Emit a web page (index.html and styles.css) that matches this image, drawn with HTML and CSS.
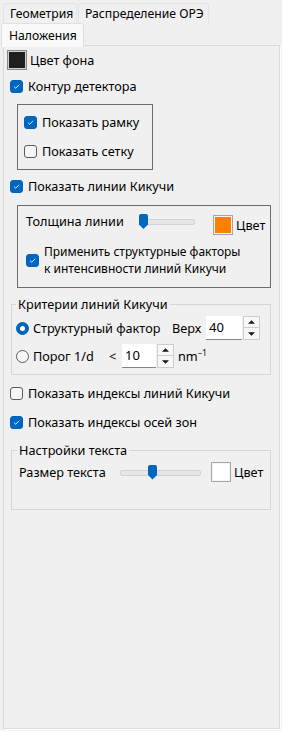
FILE: index.html
```html
<!DOCTYPE html>
<html lang="ru">
<head>
    <meta charset="UTF-8">
    <title>Наложения</title>
    <link rel="stylesheet" href="styles.css">
</head>
<body>
    <div class="tab-row tab-row-back">
        <div class="tab tab-geom">Геометрия</div>
        <div class="tab tab-dist">Распределение ОРЭ</div>
    </div>
    <div class="tab-row tab-row-front">
        <div class="tab tab-active">Наложения</div>
    </div>

    <div class="panel">
        <div class="row swatch-row">
            <span class="swatch swatch-dark"></span>
            <span>Цвет фона</span>
        </div>

        <div class="row check-row gap-6">
            <span class="box on"><svg viewBox="0 0 13 13"><path d="M3.6 6.7 L5.6 8.6 L9.5 4.5"/></svg></span>
            <span>Контур детектора</span>
        </div>

        <div class="frame frame-detector">
            <div class="row check-row">
                <span class="box on"><svg viewBox="0 0 13 13"><path d="M3.6 6.7 L5.6 8.6 L9.5 4.5"/></svg></span>
                <span>Показать рамку</span>
            </div>
            <div class="row check-row gap-9">
                <span class="box"></span>
                <span>Показать сетку</span>
            </div>
        </div>

        <div class="row check-row gap-6">
            <span class="box on"><svg viewBox="0 0 13 13"><path d="M3.6 6.7 L5.6 8.6 L9.5 4.5"/></svg></span>
            <span>Показать линии Кикучи</span>
        </div>

        <div class="frame frame-kikuchi">
            <div class="line-row">
                <span class="line-label">Толщина линии</span>
                <span class="slider slider-line"><span class="handle" style="left: 0px"></span></span>
                <span class="swatch swatch-orange"></span>
                <span class="swatch-text">Цвет</span>
            </div>
            <div class="check-row multi">
                <span class="box on"><svg viewBox="0 0 13 13"><path d="M3.6 6.7 L5.6 8.6 L9.5 4.5"/></svg></span>
                <span>Применить структурные факторы<br>к интенсивности линий Кикучи</span>
            </div>
        </div>

        <fieldset class="group group-criteria">
            <legend>Критерии линий Кикучи</legend>
            <div class="row radio-row">
                <span class="radio on"></span>
                <span class="radio-label label-sf">Структурный фактор</span>
                <span class="label-top">Верх</span>
                <div class="spin">
                    <span class="spin-input spin-wide">40</span>
                    <span class="spin-btns">
                        <span class="spin-btn"><svg viewBox="0 0 7 4"><path d="M0.5 3.5 L3.5 0.5 L6.5 3.5 Z"/></svg></span>
                        <span class="spin-btn"><svg viewBox="0 0 7 4"><path d="M0.5 0.5 L3.5 3.5 L6.5 0.5 Z"/></svg></span>
                    </span>
                </div>
            </div>
            <div class="row radio-row gap-4">
                <span class="radio"></span>
                <span class="radio-label label-d">Порог 1/d</span>
                <span class="label-lt">&lt;</span>
                <div class="spin">
                    <span class="spin-input spin-narrow">10</span>
                    <span class="spin-btns">
                        <span class="spin-btn"><svg viewBox="0 0 7 4"><path d="M0.5 3.5 L3.5 0.5 L6.5 3.5 Z"/></svg></span>
                        <span class="spin-btn"><svg viewBox="0 0 7 4"><path d="M0.5 0.5 L3.5 3.5 L6.5 0.5 Z"/></svg></span>
                    </span>
                </div>
                <span class="unit">nm<sup>−1</sup></span>
            </div>
        </fieldset>

        <div class="row check-row gap-8">
            <span class="box"></span>
            <span>Показать индексы линий Кикучи</span>
        </div>
        <div class="row check-row gap-9">
            <span class="box on"><svg viewBox="0 0 13 13"><path d="M3.6 6.7 L5.6 8.6 L9.5 4.5"/></svg></span>
            <span>Показать индексы осей зон</span>
        </div>

        <fieldset class="group group-text">
            <legend>Настройки текста</legend>
            <div class="row text-row">
                <span class="size-label">Размер текста</span>
                <span class="slider slider-size"><span class="handle" style="left: 28px"></span></span>
                <span class="swatch swatch-white"></span>
                <span class="swatch-text">Цвет</span>
            </div>
        </fieldset>
    </div>
</body>
</html>
```

FILE: styles.css
```css
* {
    box-sizing: border-box;
}

body {
    margin: 0;
    height: 731px;
    display: flex;
    flex-direction: column;
    background: #f0f0f0;
    color: #000;
    font-family: "Noto Sans", sans-serif;
    font-size: 12.7px;
}

/* tabs */
.tab-row {
    display: flex;
    gap: 1px;
}

.tab-row-back {
    margin-top: 3px;
    padding-left: 3px;
    height: 20px;
}

.tab-row-front {
    padding-left: 1px;
    height: 23px;
    position: relative;
    z-index: 1;
    margin-bottom: -1px;
}

.tab {
    height: 20px;
    padding: 0 6px;
    line-height: 19px;
    font-size: 12.2px;
    border: 1px solid #e3e3e3;
    border-bottom: none;
    border-radius: 3px 3px 0 0;
    background: #f0f0f0;
    white-space: nowrap;
}

.tab-geom {
    width: 74px;
}

.tab-dist {
    width: 131px;
}

.tab-active {
    width: 83px;
    height: 24px;
    line-height: 23px;
    padding-left: 7px;
    background: #f9f9f9;
    border-color: #e0e0e0;
}

/* panel */
.panel {
    flex: 1;
    margin: 0 2px 2px 3px;
    padding-top: 4px;
    border: 1px solid #dadada;
    box-shadow: 1px 1px 0 #fdfdfd;
}

.row {
    display: flex;
    align-items: center;
    height: 20px;
    white-space: nowrap;
}

.gap-4 { margin-top: 4px; }
.gap-6 { margin-top: 6px; }
.gap-8 { margin-top: 8px; }
.gap-9 { margin-top: 9px; }

.swatch-row {
    margin-left: 3px;
    gap: 3px;
}

.swatch {
    display: inline-block;
    width: 20px;
    height: 20px;
    flex: none;
    border: 1px solid #a6a6a6;
    box-shadow: inset 0 0 0 1px #f5f5f5;
}

.swatch-dark {
    background: #1f1f1f;
    border-color: #8a8a8a;
    box-shadow: inset 0 0 0 1px #cfcfcf;
}

.swatch-orange {
    background: #ff8000;
}

.swatch-white {
    background: #fff;
}

/* checkboxes */
.check-row {
    margin-left: 6px;
    gap: 5px;
}

.box {
    width: 13px;
    height: 13px;
    flex: none;
    border: 1px solid #5c5c5c;
    border-radius: 3px;
    background: #f6f6f6;
}

.box.on {
    border-color: #0062b8;
    background: #0067c0;
}

.box svg {
    display: block;
    width: 11px;
    height: 11px;
}

.box svg path {
    fill: none;
    stroke: #fff;
    stroke-width: 1;
}

/* plain frames */
.frame {
    border: 1px solid #6b6b6b;
}

.frame-detector {
    margin: 8px 0 0 13px;
    width: 136px;
    height: 66px;
    padding: 7px 0 0 0;
}

.frame-kikuchi {
    margin: 9px 0 0 13px;
    width: 254px;
    height: 83px;
    padding: 8px 0 0 8px;
}

.frame-kikuchi .check-row {
    margin-left: 0;
}

.line-row {
    display: flex;
    align-items: flex-start;
    height: 21px;
    white-space: nowrap;
}

.line-label {
    width: 113px;
    line-height: 15px;
}

.slider {
    position: relative;
    height: 15px;
    flex: none;
}

.slider::before {
    content: "";
    position: absolute;
    left: 0;
    right: 0;
    top: 5px;
    height: 4px;
    border: 1px solid #d2d2d2;
    border-radius: 2px;
    background: #e6e6e6;
}

.slider-line {
    width: 56px;
}

.handle {
    position: absolute;
    top: 0;
    width: 9px;
    height: 15px;
    background: #0067c0;
    clip-path: polygon(0 0, 100% 0, 100% 70%, 50% 100%, 0 70%);
    border-radius: 2px 2px 0 0;
}

.line-row .swatch {
    margin: 1px 0 0 18px;
}

.swatch-text {
    margin-left: 3px;
    line-height: 20px;
}

.line-row .swatch-text {
    margin-top: 1px;
}

.check-row.multi {
    display: flex;
    align-items: center;
    margin-top: 8px;
    line-height: 17px;
    font-size: 12px;
    white-space: nowrap;
}

/* group boxes */
.group {
    margin: 8px 0 0 7px;
    width: 260px;
    min-width: 0;
    padding: 4px 0 6px 4px;
    border: 1px solid #d6d6d6;
}

.group legend {
    padding: 0 2px;
    line-height: 16px;
}

.radio-row {
    height: 24px;
}

.radio {
    width: 13px;
    height: 13px;
    flex: none;
    border: 1px solid #5c5c5c;
    border-radius: 50%;
    background: #f6f6f6;
    position: relative;
}

.radio.on {
    border-color: #0062b8;
    background: #0067c0;
}

.radio.on::after {
    content: "";
    position: absolute;
    left: 3px;
    top: 3px;
    width: 5px;
    height: 5px;
    border-radius: 50%;
    background: #fff;
}

.radio-label {
    margin-left: 4px;
}

.label-sf {
    width: 139px;
}

.label-top {
    width: 34px;
}

.label-d {
    width: 76px;
}

.label-lt {
    width: 13px;
}

.spin {
    display: flex;
    height: 24px;
}

.spin-input {
    height: 24px;
    padding-left: 3px;
    line-height: 23px;
    background: #fff;
    border-bottom: 1px solid #868686;
    font-size: 13px;
}

.spin-wide {
    width: 36px;
}

.spin-narrow {
    width: 34px;
}

.spin-btns {
    display: flex;
    flex-direction: column;
    width: 17px;
    margin-left: 1px;
}

.spin-btn {
    height: 12px;
    display: flex;
    align-items: center;
    justify-content: center;
    border: 1px solid #cdcdcd;
    background: #f7f7f7;
}

.spin-btn + .spin-btn {
    border-top: none;
}

.spin-btn svg {
    width: 7px;
    height: 4px;
}

.spin-btn svg path {
    fill: #1a1a1a;
    stroke: #1a1a1a;
    stroke-width: 0.5;
}

.unit {
    margin-left: 4px;
}

.unit sup {
    font-size: 8px;
    vertical-align: 5px;
    line-height: 0;
}

.group-text {
    margin-top: 10px;
    padding: 4px 0 27px 7px;
}

.group-text legend {
    margin-left: -2px;
}

.size-label {
    width: 101px;
}

.slider-size {
    width: 81px;
}

.text-row .swatch {
    margin-left: 10px;
}
```
